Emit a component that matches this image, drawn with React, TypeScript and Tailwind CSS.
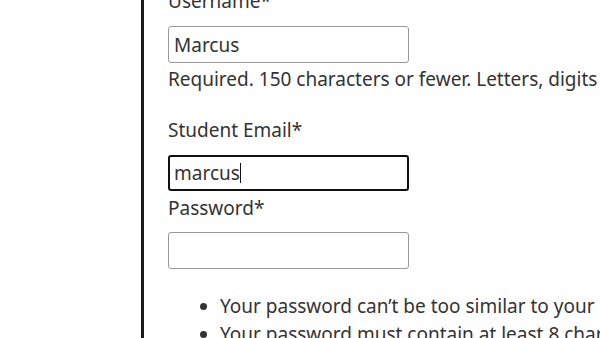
export default function App() {
  const font = { fontFamily: '"Noto Sans", "Open Sans", sans-serif' };
  return (
    <div className="w-[600px] h-[338px] overflow-hidden bg-white flex" style={font}>
      <div className="w-[141px] shrink-0" />
      <div className="w-[3px] shrink-0 bg-[#1a1a1a]" />
      <div className="flex-1 pl-[24px] text-[19px] leading-[28px] text-[#333] whitespace-nowrap">
        <div className="mt-[-13px]">Username*</div>
        <div className="mt-[11px] w-[241px] h-[37px] border border-[#9a9a9a] rounded-[3px] px-[5px] flex items-center">Marcus</div>
        <div className="mt-[2px]">Required. 150 characters or fewer. Letters, digits and @/./+/-/_ only.</div>
        <div className="mt-[23px]">Student Email*</div>
        <div className="mt-[11px] w-[241px] h-[36px] border-2 border-[#111] rounded-[3px] px-[4px] flex items-center">
          marcus<span className="inline-block w-[1.5px] h-[20px] bg-[#111]" />
        </div>
        <div className="mt-[3px]">Password*</div>
        <div className="mt-[10px] w-[241px] h-[37px] border border-[#9a9a9a] rounded-[3px]" />
        <ul className="mt-[23px] list-disc pl-[52px]">
          <li>Your password can’t be too similar to your other personal information.</li>
          <li>Your password must contain at least 8 characters.</li>
        </ul>
      </div>
    </div>
  );
}
